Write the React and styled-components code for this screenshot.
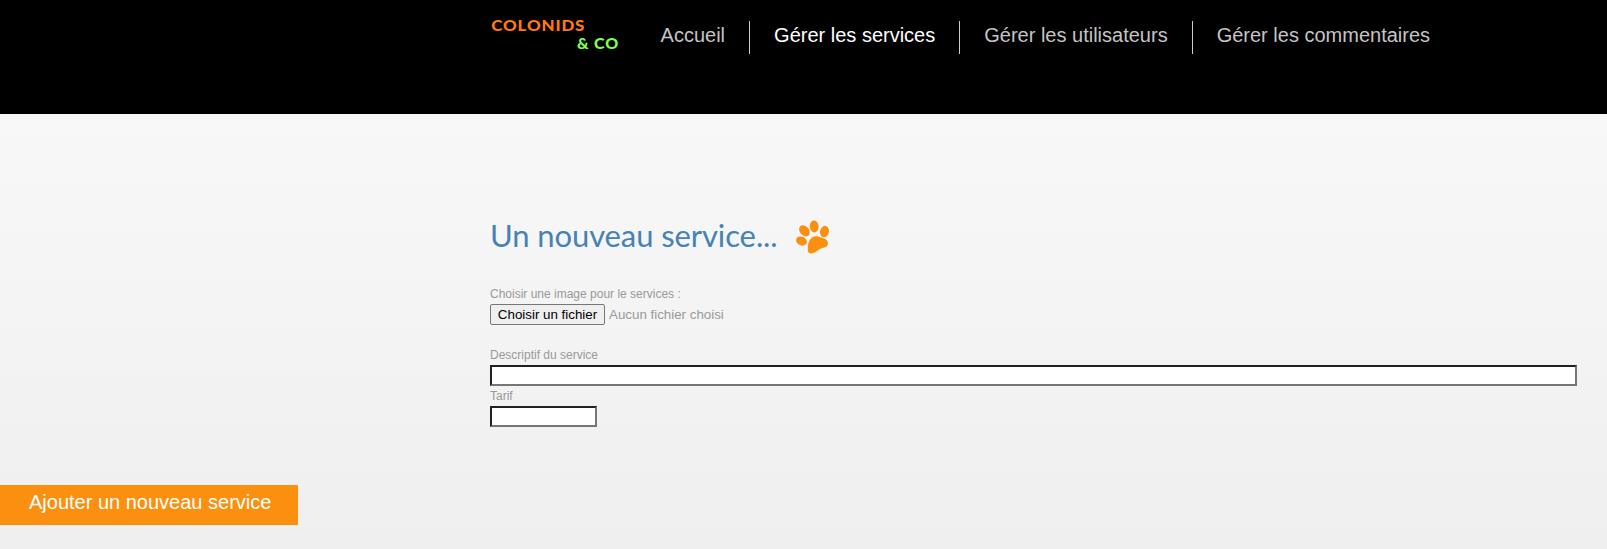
import React from 'react';
import styled, { createGlobalStyle } from 'styled-components';

const GlobalStyle = createGlobalStyle`
  * { box-sizing: border-box; }
  body {
    margin: 0;
    min-height: 549px;
    font-family: Arial, "Liberation Sans", sans-serif;
    background: #efefef;
    overflow: hidden;
  }
`;

const Page = styled.div`
  height: 549px;
  display: flex;
  flex-direction: column;
  align-items: flex-start;
  background: linear-gradient(#f8f8f8 114px, #efefef 549px);
`;

const Header = styled.header`
  width: 100%;
  height: 114px;
  padding: 15px 0 0 490px;
  display: flex;
  align-items: flex-start;
  background: #000;
`;

const Logo = styled.svg`
  width: 130px;
  height: 38px;
  flex: none;
  font: 900 15.5px Lato, "Open Sans", sans-serif;
  letter-spacing: 0.8px;
`;

const Menu = styled.nav`
  display: flex;
  margin: 6px 0 0 16.6px;
`;

const MenuLink = styled.a`
  height: 33px;
  padding: 0 24px;
  border-left: ${({ $first }) => ($first ? '0' : '1px solid #ccc')};
  color: ${({ $active }) => ($active ? '#fff' : '#c4c4c4')};
  font-size: 20px;
  line-height: 28px;
  white-space: nowrap;
`;

const Form = styled.form`
  width: 1607px;
  padding: 102px 30px 0 490px;
  display: flex;
  flex-direction: column;
  align-items: flex-start;
`;

const TitleRow = styled.div`
  display: flex;
  align-items: center;
  height: 42px;
  margin-bottom: 28px;
`;

const Title = styled.h1`
  width: 306px;
  margin: 0;
  color: #4682b4;
  font: 400 31px/38px "Comic Sans MS", Lato, cursive;
  height: 42px;
  letter-spacing: -0.1px;
  white-space: nowrap;
`;

const Paw = styled.svg`
  width: 33px;
  height: 34px;
  fill: #fa8f10;
`;

const Label = styled.label`
  height: 18px;
  color: #999;
  font-size: 12px;
  line-height: 16px;
  white-space: nowrap;
`;

const FileRow = styled.div`
  display: flex;
  align-items: center;
  gap: 4px;
  margin-bottom: 22px;
  color: #999;
  font-size: 13.333px;
`;

const FileButton = styled.button`
  width: 115px;
  height: 21px;
  padding: 0;
  border: 1px solid #767676;
  border-radius: 2px;
  background: #efefef;
  color: #000;
  font: 13.333px Arial, "Liberation Sans", sans-serif;
`;

const TextInput = styled.input`
  width: ${({ $width }) => $width};
  height: 21px;
  margin-bottom: 2px;
  padding: 1px 2px;
  border: 2px solid;
  border-color: #212121 #767676 #767676 #212121;
  border-radius: 0;
  background: #fff;
`;

const Submit = styled.button`
  width: 298px;
  height: 40px;
  margin-top: 56px;
  padding: 0 27px 6px 29px;
  border: 0;
  background: #fa8f10;
  color: #fff;
  font: 20px Arial, "Liberation Sans", sans-serif;
  text-align: left;
  white-space: nowrap;
`;

export default function App() {
  return (
    <Page>
      <GlobalStyle />
      <Header>
        <Logo viewBox="0 0 130 38" role="img" aria-label="Colonids & Co">
          <text x="1.3" y="16" fill="#ff7a10" textLength="94" lengthAdjust="spacingAndGlyphs">COLONIDS</text>
          <text x="87" y="34.3" fill="#7eff4e" textLength="42" lengthAdjust="spacingAndGlyphs">&amp; CO</text>
        </Logo>
        <Menu>
          <MenuLink $first>Accueil</MenuLink>
          <MenuLink $active>Gérer les services</MenuLink>
          <MenuLink>Gérer les utilisateurs</MenuLink>
          <MenuLink>Gérer les commentaires</MenuLink>
        </Menu>
      </Header>
      <Form>
        <TitleRow>
          <Title>Un nouveau service...</Title>
          <Paw viewBox="0 0 33 34" aria-hidden="true">
            <ellipse cx="18.2" cy="6.4" rx="4.4" ry="6" transform="rotate(-5 18.2 6.4)" />
            <ellipse cx="8.4" cy="10.8" rx="4.5" ry="6.2" transform="rotate(-42 8.4 10.8)" />
            <ellipse cx="28.5" cy="11.6" rx="4.4" ry="5.8" transform="rotate(12 28.5 11.6)" />
            <ellipse cx="5.5" cy="21" rx="4.3" ry="5.6" transform="rotate(-66 5.5 21)" />
            <path d="M13.5 20.5C15.5 17 19.5 15.4 23 16.8C25.5 18 28 18.2 30 19.6C33 21.8 32.2 26.2 29 27.2C25 28.2 22.5 29.5 19.5 32C17 34 12.3 34.2 11.9 31C11.5 28 12 23 13.5 20.5Z" />
          </Paw>
        </TitleRow>
        <Label>Choisir une image pour le services :</Label>
        <FileRow>
          <FileButton type="button">Choisir un fichier</FileButton>
          <span>Aucun fichier choisi</span>
        </FileRow>
        <Label>Descriptif du service</Label>
        <TextInput $width="100%" aria-label="Descriptif du service" />
        <Label>Tarif</Label>
        <TextInput $width="107px" aria-label="Tarif" />
      </Form>
      <Submit type="button">Ajouter un nouveau service</Submit>
    </Page>
  );
}
